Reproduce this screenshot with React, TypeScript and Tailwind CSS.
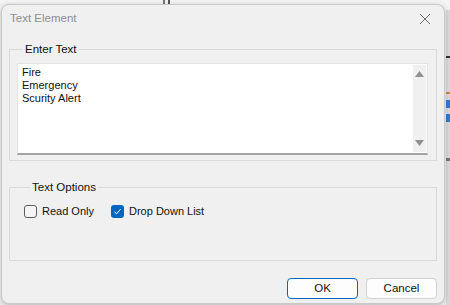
import React from 'react'

const font = { fontFamily: '"Liberation Sans", Arial, sans-serif' }

function CheckBox({ checked, label }: { checked?: boolean; label: string }) {
  return (
    <label className="flex items-center gap-[5px] text-[11px] text-[#111]">
      {checked ? (
        <span className="w-[13px] h-[13px] rounded-[3px] bg-[#0067c0] flex items-center justify-center">
          <svg width="9" height="9" viewBox="0 0 9 9">
            <path d="M1.5 4.8 L3.6 6.8 L7.6 2.2" fill="none" stroke="#fff" strokeWidth="1" />
          </svg>
        </span>
      ) : (
        <span className="w-[13px] h-[13px] rounded-[3px] border border-[#5d5d5d] bg-[#f5f5f5]" />
      )}
      <span className="leading-[14px]">{label}</span>
    </label>
  )
}

export default function App() {
  return (
    <div className="w-[450px] h-[305px] bg-[#f4f4f4] flex overflow-hidden relative" style={font}>
      {/* app behind the dialog */}
      <div className="absolute left-[163px] top-0 w-[2px] h-[4px] bg-[#777]" />
      <div className="absolute left-[168px] top-0 w-[2px] h-[4px] bg-[#555]" />
      <div className="absolute right-0 top-[10px] w-[4px] h-[295px] bg-[#dcdcdc] flex flex-col gap-[6px] pt-[46px]">
        <div className="h-[2px] bg-[#333]" />
        <div className="h-[2px] bg-[#d08a3a] mt-[28px]" />
        <div className="h-[8px] bg-[#2a7fd4]" />
        <div className="h-[8px] bg-[#2a7fd4]" />
        <div className="h-[3px] bg-[#777] mt-[30px]" />
      </div>

      <div className="mt-[4px] ml-[1px] w-[444px] h-[300px] bg-[#f0f0f0] rounded-[8px] border border-[#c9c9c9] shadow-[0_2px_6px_rgba(0,0,0,0.25)] flex flex-col relative z-10">
        {/* title bar */}
        <div className="h-[28px] flex items-center justify-between pl-[8px] pr-[7px]">
          <span className="text-[11.5px] text-[#8e8e8e]">Text Element</span>
          <svg width="24" height="20" viewBox="0 0 24 20">
            <path d="M7 5 L17 15 M17 5 L7 15" stroke="#6e6e6e" strokeWidth="1" fill="none" />
          </svg>
        </div>

        <div className="flex flex-col px-[7px] pt-[8px]">
          <fieldset className="border border-[#dadada] pl-[7px] pr-[8px] pb-[5px] pt-[6px] h-[120px]">
            <legend className="ml-[6px] px-[2px] text-[11.5px] leading-[16px] text-[#111]">Enter Text</legend>
            <div className="h-[92px] bg-white border border-[#e4e4e4] border-b-2 border-b-[#a3a3a3] flex">
              <div className="flex-1 pl-[4px] pt-[2px] text-[11px] leading-[13px] text-[#111] flex flex-col">
                <span>Fire</span>
                <span>Emergency</span>
                <span>Scurity Alert</span>
              </div>
              <div className="w-[13px] my-[1px] mr-[1px] bg-[#f0f0f0] flex flex-col justify-between items-center py-[6px]">
                <svg width="9" height="6" viewBox="0 0 9 6">
                  <path d="M0 6 L4.5 0 L9 6 Z" fill="#8f8f8f" />
                </svg>
                <svg width="9" height="6" viewBox="0 0 9 6">
                  <path d="M0 0 L4.5 6 L9 0 Z" fill="#8f8f8f" />
                </svg>
              </div>
            </div>
          </fieldset>

          <fieldset className="mt-[18px] border border-[#dadada] h-[82px] pl-[14px] pt-[9px] pr-[8px]">
            <legend className="ml-[6px] px-[2px] text-[11.5px] leading-[16px] text-[#111]">Text Options</legend>
            <div className="flex items-center gap-[17px]">
              <CheckBox label="Read Only" />
              <CheckBox checked label="Drop Down List" />
            </div>
          </fieldset>

          <div className="flex justify-end gap-[8px] mt-[17px]">
            <button className="w-[71px] h-[21px] rounded-[4px] bg-[#fdfdfd] border border-[#0067c0] text-[11.5px] text-[#111] leading-none">
              OK
            </button>
            <button className="w-[71px] h-[21px] rounded-[4px] bg-[#fdfdfd] border border-[#d0d0d0] text-[11.5px] text-[#111] leading-none">
              Cancel
            </button>
          </div>
        </div>
      </div>
    </div>
  )
}
